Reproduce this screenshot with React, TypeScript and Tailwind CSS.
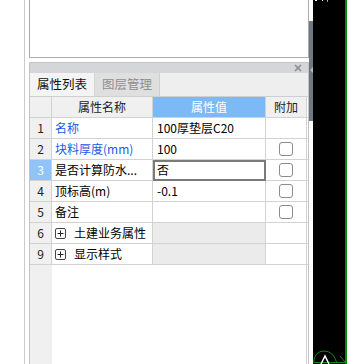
import React from "react";

const font = "font-['Noto_Sans_CJK_SC','Noto_Sans',sans-serif]";

function Check() {
  return <div className="w-[14px] h-[14px] rounded-[3px] border border-[#8c8c8c] bg-white" />;
}

function Plus() {
  return (
    <div className="w-[11px] h-[11px] rounded-[2px] border border-[#444] flex items-center justify-center mr-[8px]">
      <svg width="7" height="7" viewBox="0 0 7 7">
        <path d="M3.5 0.5V6.5M0.5 3.5H6.5" stroke="#222" strokeWidth="1" />
      </svg>
    </div>
  );
}

type Row = {
  idx: string;
  name: React.ReactNode;
  blue?: boolean;
  value?: string;
  check?: boolean;
  sel?: boolean;
  group?: boolean;
};

const rows: Row[] = [
  { idx: "1", name: "名称", blue: true, value: "100厚垫层C20" },
  { idx: "2", name: "块料厚度(mm)", blue: true, value: "100", check: true },
  { idx: "3", name: "是否计算防水...", value: "否", check: true, sel: true },
  { idx: "4", name: "顶标高(m)", value: "-0.1", check: true },
  { idx: "5", name: "备注", value: "", check: true },
  { idx: "6", name: "土建业务属性", group: true },
  { idx: "9", name: "显示样式", group: true },
];

export default function App() {
  return (
    <div className={`w-[347px] h-[364px] flex bg-white overflow-hidden text-[12px] ${font}`}>
      <div className="w-[25px] h-full border-r border-[#cacaca] bg-white" />
      <div className="w-[4px] h-full bg-white" />
      <div className="w-[280px] h-full flex flex-col">
        <div className="h-[58px] border-x border-b border-[#ababab] bg-white shrink-0" />
        <div className="h-[4px] shrink-0" />
        <div className="flex-1 flex flex-col border-x border-t border-[#c2c4c8] min-h-0 bg-white">
          <div className="h-[10px] bg-[#d4d6da] flex items-center justify-end pr-[6px] shrink-0">
            <svg width="8" height="8" viewBox="0 0 8 8">
              <path d="M1 1L7 7M7 1L1 7" stroke="#8a8c90" strokeWidth="1.6" />
            </svg>
          </div>
          <div className="h-[24px] bg-[#eeeeee] flex border-b border-[#cfcfcf] shrink-0">
            <div className="w-[65px] h-full bg-[#f4f4f4] flex items-center justify-center text-[#111] border-r border-[#d6d6d6] text-[12.5px]">
              属性列表
            </div>
            <div className="w-[65px] h-full bg-[#dfdfdf] flex items-center justify-center text-[#8e8e8e] border-r border-[#d0d0d0] text-[12.5px]">
              图层管理
            </div>
          </div>
          {/* header */}
          <div className="h-[21px] flex border-b border-[#d2d2d2] shrink-0">
            <div className="w-[22px] h-full bg-[#f0f0f0] border-r border-[#d2d2d2]" />
            <div className="w-[101px] h-full bg-[#f0f0f0] border-r border-[#d2d2d2] flex items-center justify-center text-[#222]">
              属性名称
            </div>
            <div className="w-[113px] h-full bg-[#7db9f5] border-r border-[#d2d2d2] flex items-center justify-center text-white">
              属性值
            </div>
            <div className="w-[41px] h-full bg-[#f0f0f0] border-r border-[#d2d2d2] flex items-center justify-center text-[#222]">
              附加
            </div>
          </div>
          {rows.map((r) => (
            <div key={r.idx} className="h-[21px] flex border-b border-[#d2d2d2] shrink-0">
              <div
                className={`w-[22px] h-full border-r border-[#d2d2d2] flex items-center justify-center ${
                  r.sel ? "bg-[#90c4f6] text-white" : "bg-[#f0f0f0] text-[#222]"
                }`}
              >
                {r.idx}
              </div>
              <div
                className={`w-[101px] h-full border-r border-[#d2d2d2] flex items-center pl-[3px] whitespace-nowrap overflow-hidden ${
                  r.blue ? "text-[#1a5ae6]" : "text-[#000]"
                }`}
              >
                {r.group && <Plus />}
                {r.name}
              </div>
              <div
                className={`relative w-[113px] h-full border-r border-[#d2d2d2] flex items-center pl-[4px] text-[#000] whitespace-nowrap ${
                  r.group ? "bg-[#ebebeb]" : "bg-white"
                }`}
              >
                {r.value}
                {r.sel && (
                  <div className="absolute top-0 left-0 right-[-1px] bottom-[-1px] border-2 border-[#7a7a7a]" />
                )}
              </div>
              <div className="w-[41px] h-full border-r border-[#d2d2d2] flex items-center justify-center">
                {r.check && <Check />}
              </div>
            </div>
          ))}
          <div className="flex-1 flex">
            <div className="w-[22px] h-full bg-[#f0f0f0]" />
            <div className="w-[255px] h-full border-r border-[#d2d2d2]" />
          </div>
        </div>
      </div>
      <div className="w-[4px] h-full flex flex-col bg-white">
        <div className="h-[21px]" />
        <div className="h-[100px] bg-[#6e7782] relative">
          <svg className="absolute left-[1px] top-[46px]" width="3" height="6" viewBox="0 0 3 6">
            <path d="M3 0L0 3L3 6Z" fill="#b3bac2" />
          </svg>
        </div>
      </div>
      <div className="w-[32px] h-full bg-black relative">
        <svg className="absolute left-0 top-0" width="32" height="364" viewBox="0 0 32 364">
          <path d="M2 0.5h2M9 0.5h1M14 1h1M14 0h1" stroke="#ffffff" strokeWidth="1" />
          <path d="M0.5 362 Q2 351 11 351 Q20 351 23.5 362" stroke="#0a8a0a" strokeWidth="1" fill="none" />
          <path d="M0 362.5H32" stroke="#0a8a0a" strokeWidth="1" />
          <path d="M27 356L32 362" stroke="#0a8a0a" strokeWidth="1" />
          <path d="M8 364L12 356L16 364" stroke="#ffffff" strokeWidth="1.5" fill="none" />
        </svg>
      </div>
      <div className="w-[2px] h-full bg-[#0a8a0a]" />
    </div>
  );
}
